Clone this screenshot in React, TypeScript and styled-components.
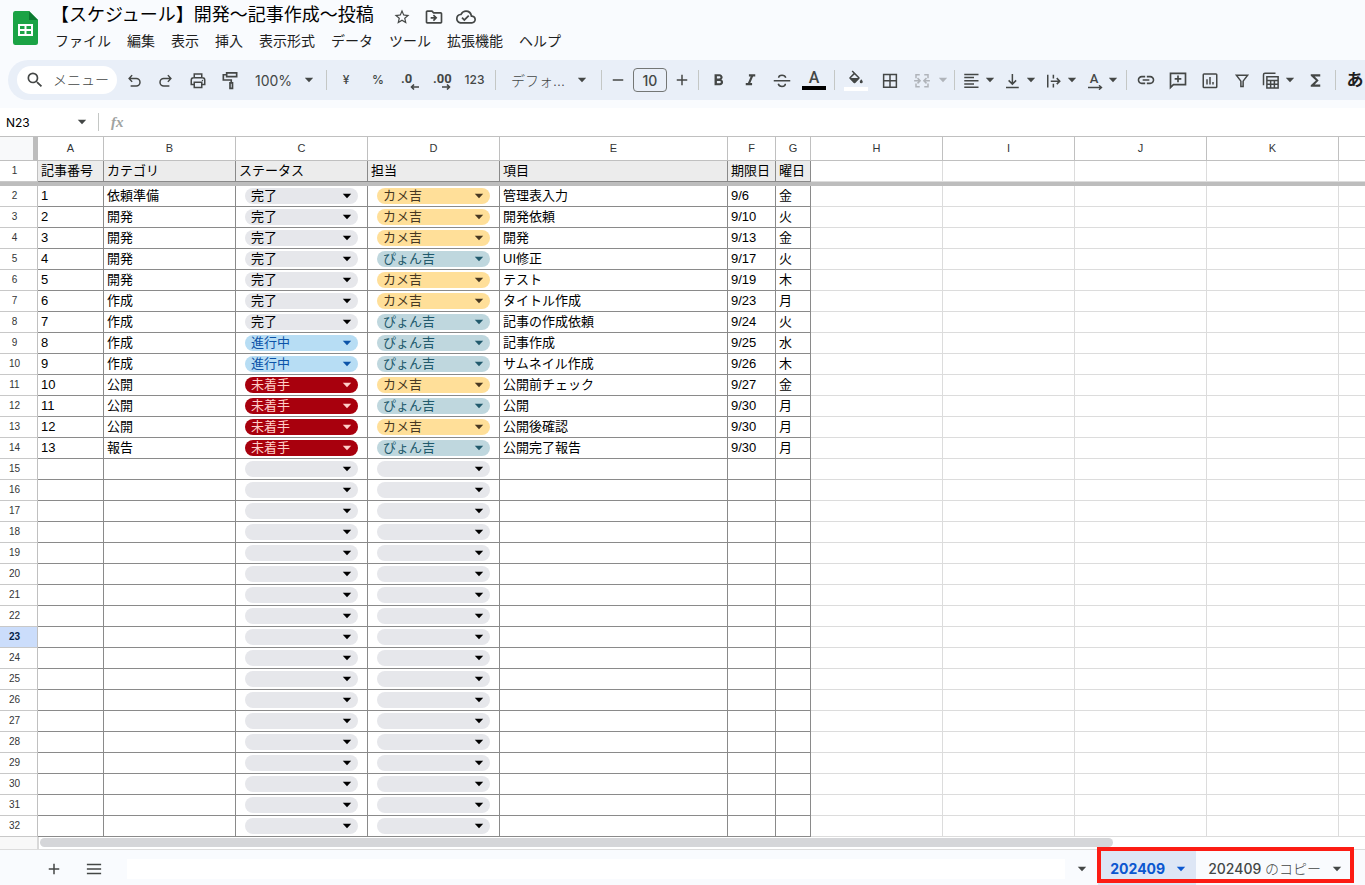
import React from "react";
import styled, { createGlobalStyle, css } from "styled-components";
import {
  MdStarBorder,
  MdOutlineDriveFileMove,
  MdOutlineCloudDone,
  MdFormatBold,
  MdFormatItalic,
  MdLink,
  MdFunctions,
  MdSearch,
} from "react-icons/md";

const GlobalStyle = createGlobalStyle`
  * { box-sizing: border-box; }
  body {
    margin: 0;
    background: #f9fbfe;
    color: #1f1f1f;
    font-family: "Liberation Sans", "Noto Sans CJK JP", sans-serif;
    overflow-x: hidden;
  }
  button, input, select {
    font: inherit;
    color: inherit;
    margin: 0;
    padding: 0;
    border: 0;
    background: none;
    outline: none;
  }
  select { appearance: none; cursor: pointer; }
  button { cursor: pointer; }
`;

const INK = "#444746";

/* ---------- page frame ---------- */

const Page = styled.div`
  display: flex;
  flex-direction: column;
  min-height: 100vh;
`;

const Header = styled.header`
  display: flex;
  height: 60px;
  padding-left: 12px;
  gap: 9px;
`;

const LogoLink = styled.a`
  display: block;
  width: 26px;
  height: 34px;
  margin-top: 11px;
`;

const HeaderText = styled.div`
  flex: 1;
  min-width: 0;
`;

const TitleRow = styled.div`
  display: flex;
  align-items: center;
  height: 31px;
  padding-left: 4px;
`;

const Title = styled.h1`
  margin: 0 12px 0 0;
  font-size: 18px;
  line-height: 31px;
  font-weight: 400;
  color: #000;
  white-space: nowrap;
`;

const TitleButton = styled.button`
  display: flex;
  align-items: center;
  justify-content: center;
  width: 32px;
  height: 31px;
  padding-top: 3px;
  color: ${INK};
`;

const MenuBar = styled.nav`
  display: flex;
  height: 20px;
`;

const MenuItem = styled.button`
  padding: 0 8px;
  font-size: 14px;
  line-height: 20px;
  white-space: nowrap;
`;

/* ---------- toolbar ---------- */

const Toolbar = styled.div`
  display: flex;
  align-items: center;
  height: 40px;
  margin: 0 0 8px 8px;
  padding-left: 9px;
  border-radius: 20px 0 0 20px;
  background: #e9eff8;
  color: ${INK};
  overflow: hidden;
  font-family: Inter, "Noto Sans CJK JP", sans-serif;
  font-size: 14px;
  & > * { flex-shrink: 0; }
`;

const SearchBox = styled.label`
  display: flex;
  align-items: center;
  gap: 8px;
  width: 100px;
  height: 28px;
  margin-right: 1px;
  padding-left: 8px;
  border-radius: 14px;
  background: #fff;
`;

const SearchInput = styled.input`
  width: 60px;
  font-weight: 300;
  line-height: 20px;
  &::placeholder { color: ${INK}; opacity: 1; }
`;

const Tool = styled.button<{ $width?: number }>`
  display: flex;
  flex-direction: column;
  align-items: center;
  justify-content: center;
  width: ${(p) => p.$width ?? 32}px;
  height: 32px;
  font-size: 12px;
  font-weight: 500;
  line-height: 16px;
`;

const SplitTool = styled.button<{ $wide?: boolean }>`
  display: flex;
  align-items: center;
  gap: ${(p) => (p.$wide ? 7 : 5)}px;
  padding: ${(p) => (p.$wide ? "0 2px 0 7px" : "0 4px")};
  height: 32px;
  &:disabled { color: #b0b4ba; cursor: default; }
`;

const Separator = styled.span`
  width: 1px;
  height: 20px;
  margin: 0 3px 0 4px;
  background: #c4c7c5;
`;

const SelectBox = styled.span<{ $width: number; $end: number }>`
  display: grid;
  align-items: center;
  width: ${(p) => p.$width}px;
  height: 32px;
  & > select, & > svg { grid-area: 1 / 1; }
  & > select { width: 100%; height: 32px; padding-left: 9px; }
  & > svg { justify-self: end; margin-right: ${(p) => p.$end}px; pointer-events: none; }
`;

const FontSelect = styled.select`
  font-weight: 300;
  text-indent: 3px;
`;

const Stepper = styled.span`
  display: flex;
  align-items: center;
  gap: 3px;
  padding-left: 1px;
`;

const SizeInput = styled.input`
  width: 34px;
  height: 24px;
  border: 1px solid #747775;
  border-radius: 4px;
  text-align: center;
  font-weight: 500;
`;

const ColorBar = styled.span<{ $color: string }>`
  width: 24px;
  height: 4px;
  background: ${(p) => p.$color};
`;

const Letter = styled.span<{ $size: number }>`
  font-family: Roboto, sans-serif;
  font-size: ${(p) => p.$size}px;
  line-height: ${(p) => p.$size}px;
  font-weight: 500;
`;

const Decimal = styled.span`
  display: flex;
  flex-direction: column;
  width: 18px;
  padding-top: 2px;
  font-family: Roboto, sans-serif;
  font-size: 13px;
  font-weight: 700;
  line-height: 11px;
  text-align: left;
  & > svg { align-self: flex-end; }
`;

const StackedIcon = styled.span`
  display: flex;
  flex-direction: column;
  align-items: center;
  width: 18px;
  padding-top: 2px;
`;

const KanaMode = styled.span`
  color: #1f1f1f;
  font-size: 17px;
  font-weight: 700;
`;

/* ---------- formula bar ---------- */

const FormulaBar = styled.div`
  display: flex;
  align-items: center;
  height: 29px;
  background: #fff;
  border-bottom: 1px solid #c0c0c0;
`;

const NameBox = styled.input`
  width: 77px;
  padding-left: 6px;
  font-family: Inter, sans-serif;
  font-size: 12px;
  color: #000;
`;

const NameMenu = styled.button`
  display: flex;
  width: 21px;
  color: ${INK};
`;

const BarRule = styled.span`
  width: 1px;
  height: 18px;
  background: #c4c7c5;
`;

const FxLabel = styled.label`
  width: 34px;
  padding-left: 12px;
  font-family: "Liberation Serif", serif;
  font-style: italic;
  font-weight: 700;
  font-size: 15px;
  line-height: 24px;
  color: #a0a3a2;
`;

const FormulaInput = styled.input`
  flex: 1;
  font-size: 13px;
`;

/* ---------- grid ---------- */

const GridArea = styled.main`
  flex: 1;
  background: #fff;
  overflow: hidden;
`;

const Sheet = styled.table`
  width: 100%;
  table-layout: fixed;
  border-collapse: separate;
  border-spacing: 0;
  color: #000;
  & tr > *:last-child { border-right: 0; }
`;

const Column = styled.col<{ $width?: number }>`
  width: ${(p) => (p.$width ? `${p.$width}px` : "auto")};
`;

const Corner = styled.td`
  padding: 0;
  background: #f8f9fa;
  border-right: 5px solid #bdbdbd;
  border-bottom: 1px solid #c0c0c0;
`;

const ColumnHead = styled.th`
  height: 24px;
  padding: 0 0 2px;
  border-right: 1px solid #c0c0c0;
  border-bottom: 1px solid #c0c0c0;
  font-size: 11px;
  line-height: 20px;
  font-weight: 400;
  color: #333536;
`;

const RowHead = styled.th<{ $selected?: boolean }>`
  height: 21px;
  padding: 0 8px 0 0;
  border-right: 1px solid #c0c0c0;
  border-bottom: 1px solid #c8c8c8;
  font-size: 10px;
  font-weight: ${(p) => (p.$selected ? 700 : 400)};
  line-height: 20px;
  color: ${(p) => (p.$selected ? "#041e49" : "#333536")};
  background: ${(p) => (p.$selected ? "#cbddfb" : "#fff")};
`;

const Cell = styled.td<{ $ruled?: boolean; $head?: boolean }>`
  height: 21px;
  padding: 0 0 0 3px;
  border-right: 1px solid #dcdcdc;
  border-bottom: 1px solid #dcdcdc;
  font-size: 13px;
  line-height: 20px;
  white-space: nowrap;
  overflow: hidden;
  ${(p) => p.$ruled && css`border-color: #8a8a8a;`}
  ${(p) => p.$head && css`background: #ececec;`}
`;

const ChipCell = styled(Cell)`
  padding: 0 9px;
`;

const FreezeBar = styled.td`
  height: 4px;
  padding: 0;
  background: #bdbdbd;
`;

const tones = {
  empty: ["#e6e7eb", "#000000"],
  gray: ["#e6e7eb", "#000000"],
  blue: ["#b7ddf4", "#0b53a8"],
  red: ["#a8000d", "#ffcfc9"],
  yellow: ["#ffdf99", "#473822"],
  teal: ["#bfd7de", "#215a6c"],
} as const;
type Tone = keyof typeof tones;

const Chip = styled.span<{ $tone: Tone }>`
  display: grid;
  align-items: center;
  height: 16px;
  border-radius: 8px;
  background: ${(p) => tones[p.$tone][0]};
  color: ${(p) => tones[p.$tone][1]};
  & > select, & > svg { grid-area: 1 / 1; }
  & > select { width: 100%; height: 16px; padding-left: 6px; line-height: 16px; }
  & > svg { justify-self: end; margin-right: 6px; pointer-events: none; }
`;

/* ---------- bottom ---------- */

const ScrollRow = styled.div`
  display: flex;
  height: 13px;
  background: #fff;
  border-bottom: 1px solid #dcdcdc;
`;

const ScrollCorner = styled.div`
  width: 39px;
  background: #f8f8f8;
  border-right: 2px solid #d9d9d9;
`;

const ScrollTrack = styled.div`
  flex: 1;
  padding: 1px 0 0 1px;
`;

const ScrollThumb = styled.div`
  width: 81%;
  height: 9px;
  border-radius: 5px;
  background: #d5d6d9;
`;

const BottomBar = styled.footer`
  display: flex;
  align-items: center;
  height: 35px;
  padding: 0 13px 0 34px;
  color: ${INK};
`;

const BottomButton = styled.button`
  display: flex;
  align-items: center;
  justify-content: center;
  width: 40px;
  height: 32px;
  padding-top: 2px;
`;

const TabStrip = styled.div`
  flex: 1;
  height: 20px;
  margin: 2px 12px 0 13px;
  background: #fff;
`;

const TabScroll = styled.button`
  display: flex;
  width: 21px;
  margin-top: 3px;
`;

const MarkedTabs = styled.div`
  position: relative;
  display: flex;
  align-self: stretch;
  &::after {
    content: "";
    position: absolute;
    inset: -3px -2px 2px -1px;
    border: 4px solid #fc1c14;
    pointer-events: none;
  }
`;

const SheetTab = styled.button<{ $active?: boolean }>`
  display: flex;
  align-items: center;
  gap: 11px;
  padding: 3px 10px 0 12px;
  font-family: Inter, "Noto Sans CJK JP", sans-serif;
  font-size: 14px;
  line-height: 20px;
  white-space: nowrap;
  font-weight: ${(p) => (p.$active ? 700 : 500)};
  color: ${(p) => (p.$active ? "#0b57d0" : INK)};
  background: ${(p) => (p.$active ? "#dde6f5" : "transparent")};
`;

const TabKana = styled.span`
  font-weight: 300;
`;

/* ---------- drawings ---------- */

const Arrow = () => (
  <svg width="10" height="10" viewBox="0 0 10 10" aria-hidden="true">
    <path d="M.8 2.800h8.400L5 7.200z" fill="currentColor" />
  </svg>
);

const Line = ({ children, size = 18, sw = 2 }: { children: React.ReactNode; size?: number; sw?: number }) => (
  <svg width={size} height={size} viewBox="0 0 24 24" fill="none" stroke="currentColor" strokeWidth={sw} aria-hidden="true">
    {children}
  </svg>
);

const SheetsLogo = () => (
  <svg width="26" height="34" viewBox="0 0 26 34" aria-hidden="true">
    <path d="M3 0h14l9 9v22.500a2.500 2.500 0 0 1-2.500 2.500H3a2.500 2.500 0 0 1-2-2.500v-29A2.500 2.500 0 0 1 3 0z" fill="#1ba345" />
    <path d="M17 0l9 9h-9z" fill="#0c7a31" />
    <path d="M6 13h15v12H6z" fill="#fff" />
    <path d="M8 15h4.500v3H8zM14.500 15H19v3h-4.500zM8 20h4.500v3H8zM14.500 20H19v3h-4.500z" fill="#1ba345" />
  </svg>
);

const UndoIcon = () => (
  <Line><path d="M9.500 5.500L5.500 10l4 4.500M6 10h9a4.500 4.500 0 0 1 0 10H7.500" /></Line>
);
const RedoIcon = () => (
  <Line><path d="M14.500 5.500l4 4.500-4 4.500M18 10H9a4.500 4.500 0 0 0 0 10h7.500" /></Line>
);
const PrintIcon = () => (
  <Line>
    <path d="M7 9V4h10v5M7 18H3v-6a3 3 0 0 1 3-3h12a3 3 0 0 1 3 3v6h-4M7 15h10v7H7z" />
    <circle cx="18" cy="12.500" r="1" fill="currentColor" stroke="none" />
  </Line>
);
const PaintIcon = () => (
  <Line size={20}>
    <path d="M8 3.500h12v4.500H8zM8 5.700H4V12h9.500v3M12 15.500h3V22h-3z" />
  </Line>
);
const StrikeIcon = () => (
  <Line>
    <path d="M1 13h22M17 9c-.6-2.400-2.500-3.500-5-3.500S7.500 7 7.500 9M7 17c.6 2.400 2.500 3.500 5 3.500s4.500-1.500 4.500-3.500" />
  </Line>
);
const BucketIcon = () => (
  <svg width="18" height="18" viewBox="0 0 24 20" fill="currentColor" aria-hidden="true">
    <path d="M16.560 8.940L7.620 0 6.210 1.410l2.380 2.380-5.150 5.150a1.490 1.490 0 0 0 0 2.120l5.500 5.500c.29.29.68.44 1.060.44s.77-.15 1.060-.44l5.500-5.500c.59-.58.59-1.530 0-2.120zM5.210 10L10 5.210 14.790 10H5.210zM19 11.500s-2 2.170-2 3.500a2 2 0 0 0 4 0c0-1.330-2-3.500-2-3.500z" />
  </svg>
);
const BordersIcon = () => (
  <Line><path d="M3.500 4.500h17v17h-17zM12 4v18M3 13h18" /></Line>
);
const MergeIcon = () => (
  <Line>
    <path d="M9 5H4v4.500M4 16.500V21h5M15 5h5v4.500M20 16.500V21h-5M1.500 13h7.500M6 9.500L9.500 13 6 16.500M22.500 13H15M18 9.500L14.500 13l3.500 3.500" />
  </Line>
);
const AlignIcon = () => (
  <Line><path d="M3 4.500h19M3 8.800h13M3 13h19M3 17.200h13M3 21.500h19" /></Line>
);
const BottomAlignIcon = () => (
  <Line><path d="M4 22h17M12.500 4v13M7.500 12.500l5 5 5-5" /></Line>
);
const OverflowIcon = () => (
  <Line><path d="M5 5v17M12.500 5v5M12.500 17v5M9 13.500h12M17 9.500l4 4-4 4" /></Line>
);
const RightArrow = () => (
  <svg width="18" height="5" viewBox="0 0 18 5" fill="none" stroke="currentColor" strokeWidth="1.400" aria-hidden="true">
    <path d="M3 2.500h13M14 0.300l2.500 2.200L14 4.700" />
  </svg>
);
const SmallArrow = ({ left }: { left?: boolean }) => (
  <svg width="9" height="6" viewBox="0 0 9 6" fill="none" stroke="currentColor" strokeWidth="1.600" aria-hidden="true">
    <path d={left ? "M9 3H1.500M4 .5L1.500 3 4 5.500" : "M0 3h7.500M5 .5L7.500 3 5 5.500"} />
  </svg>
);
const CommentIcon = () => (
  <Line size={20}><path d="M3 21V4h18v13.500H6.500zM12 6.700v8M8 10.700h8" /></Line>
);
const ChartIcon = () => (
  <Line><rect x="3" y="4" width="18" height="18" rx="1" /><path d="M8 11v7M12 8v10M16 14.500V18" /></Line>
);
const FilterIcon = () => (
  <Line><path d="M4.500 5.500h15L13.500 13.500v7h-3v-7z" /></Line>
);
const TableViewIcon = () => (
  <Line>
    <path d="M2 19V5a2 2 0 0 1 2-2h14M6.500 7.500h15v15h-15zM6.500 12.500h15M6.500 17.500h15M11.500 12v10M16.500 12v10" />
  </Line>
);
const PlusIcon = () => (
  <Line><path d="M12 5v14M5 12h14" /></Line>
);
const MinusIcon = () => (
  <Line><path d="M5 12h14" /></Line>
);
const ListIcon = () => (
  <Line><path d="M2.500 6h19M2.500 12h19M2.500 18h19" /></Line>
);

/* ---------- data ---------- */

const menus = ["ファイル", "編集", "表示", "挿入", "表示形式", "データ", "ツール", "拡張機能", "ヘルプ"];

const columns: [string, number?][] = [
  ["A", 66], ["B", 132], ["C", 132], ["D", 132], ["E", 228], ["F", 48],
  ["G", 35], ["H", 132], ["I", 132], ["J", 132], ["K", 132], [""],
];
const outside = ["H", "I", "J", "K", "L"];

const headings = ["記事番号", "カテゴリ", "ステータス", "担当", "項目", "期限日", "曜日"];

const tasks = [
  ["1", "依頼準備", "完了", "カメ吉", "管理表入力", "9/6", "金"],
  ["2", "開発", "完了", "カメ吉", "開発依頼", "9/10", "火"],
  ["3", "開発", "完了", "カメ吉", "開発", "9/13", "金"],
  ["4", "開発", "完了", "ぴょん吉", "UI修正", "9/17", "火"],
  ["5", "開発", "完了", "カメ吉", "テスト", "9/19", "木"],
  ["6", "作成", "完了", "カメ吉", "タイトル作成", "9/23", "月"],
  ["7", "作成", "完了", "ぴょん吉", "記事の作成依頼", "9/24", "火"],
  ["8", "作成", "進行中", "ぴょん吉", "記事作成", "9/25", "水"],
  ["9", "作成", "進行中", "ぴょん吉", "サムネイル作成", "9/26", "木"],
  ["10", "公開", "未着手", "カメ吉", "公開前チェック", "9/27", "金"],
  ["11", "公開", "未着手", "ぴょん吉", "公開", "9/30", "月"],
  ["12", "公開", "未着手", "カメ吉", "公開後確認", "9/30", "月"],
  ["13", "報告", "未着手", "ぴょん吉", "公開完了報告", "9/30", "月"],
];
const blank = ["", "", "", "", "", "", ""];
const LAST_ROW = 32;
const SELECTED_ROW = 23;

const toneOf: Record<string, Tone> = {
  "": "empty",
  完了: "gray",
  進行中: "blue",
  未着手: "red",
  カメ吉: "yellow",
  ぴょん吉: "teal",
};

function ChipSelect({ value, options, label }: { value: string; options: string[]; label: string }) {
  const [current, setCurrent] = React.useState(value);
  return (
    <Chip $tone={toneOf[current]}>
      <select aria-label={label} value={current} onChange={(e) => setCurrent(e.target.value)}>
        <option value="" />
        {options.map((o) => (
          <option key={o}>{o}</option>
        ))}
      </select>
      <Arrow />
    </Chip>
  );
}

function TaskRow({ row }: { row: number }) {
  const [no, category, status, owner, item, due, day] = tasks[row - 2] ?? blank;
  return (
    <tr>
      <RowHead scope="row" $selected={row === SELECTED_ROW}>{row}</RowHead>
      <Cell $ruled>{no}</Cell>
      <Cell $ruled>{category}</Cell>
      <ChipCell $ruled>
        <ChipSelect value={status} options={["完了", "進行中", "未着手"]} label={`ステータス ${row}`} />
      </ChipCell>
      <ChipCell $ruled>
        <ChipSelect value={owner} options={["カメ吉", "ぴょん吉"]} label={`担当 ${row}`} />
      </ChipCell>
      <Cell $ruled>{item}</Cell>
      <Cell $ruled>{due}</Cell>
      <Cell $ruled>{day}</Cell>
      {outside.map((c) => <Cell key={c} />)}
    </tr>
  );
}

export default function App() {
  const rows = Array.from({ length: LAST_ROW - 1 }, (_, i) => i + 2);
  return (
    <Page>
      <GlobalStyle />
      <Header>
        <LogoLink href="#" aria-label="スプレッドシート ホーム"><SheetsLogo /></LogoLink>
        <HeaderText>
          <TitleRow>
            <Title>【スケジュール】開発〜記事作成〜投稿</Title>
            <TitleButton aria-label="スター"><MdStarBorder size={18} /></TitleButton>
            <TitleButton aria-label="移動"><MdOutlineDriveFileMove size={20} /></TitleButton>
            <TitleButton aria-label="保存状況"><MdOutlineCloudDone size={20} /></TitleButton>
          </TitleRow>
          <MenuBar>
            {menus.map((m) => <MenuItem key={m}>{m}</MenuItem>)}
          </MenuBar>
        </HeaderText>
      </Header>

      <Toolbar role="toolbar">
        <SearchBox>
          <MdSearch size={20} />
          <SearchInput placeholder="メニュー" aria-label="メニューを検索" />
        </SearchBox>
        <Tool aria-label="元に戻す"><UndoIcon /></Tool>
        <Tool aria-label="やり直す"><RedoIcon /></Tool>
        <Tool aria-label="印刷"><PrintIcon /></Tool>
        <Tool aria-label="書式を貼り付け"><PaintIcon /></Tool>
        <SelectBox $width={76} $end={8}>
          <select aria-label="ズーム" defaultValue="100%">
            <option>100%</option>
          </select>
          <Arrow />
        </SelectBox>
        <Separator />
        <Tool aria-label="通貨">¥</Tool>
        <Tool aria-label="パーセント">%</Tool>
        <Tool aria-label="小数点以下の桁数を減らす"><Decimal>.0<SmallArrow left /></Decimal></Tool>
        <Tool aria-label="小数点以下の桁数を増やす"><Decimal>.00<SmallArrow /></Decimal></Tool>
        <Tool $width={33} aria-label="表示形式の詳細">123</Tool>
        <Separator />
        <SelectBox $width={98} $end={10}>
          <FontSelect aria-label="フォント" defaultValue="デフォ...">
            <option>デフォ...</option>
          </FontSelect>
          <Arrow />
        </SelectBox>
        <Separator />
        <Stepper>
          <Tool $width={24} aria-label="フォントサイズを縮小"><MinusIcon /></Tool>
          <SizeInput aria-label="フォントサイズ" defaultValue="10" />
          <Tool $width={24} aria-label="フォントサイズを拡大"><PlusIcon /></Tool>
        </Stepper>
        <Separator />
        <Tool aria-label="太字"><MdFormatBold size={19} /></Tool>
        <Tool aria-label="斜体"><MdFormatItalic size={19} /></Tool>
        <Tool aria-label="取り消し線"><StrikeIcon /></Tool>
        <Tool aria-label="テキストの色"><Letter $size={16}>A</Letter><ColorBar $color="#000" /></Tool>
        <Separator />
        <Tool $width={36} aria-label="塗りつぶしの色"><BucketIcon /><ColorBar $color="#fff" /></Tool>
        <Tool aria-label="枠線"><BordersIcon /></Tool>
        <SplitTool $wide disabled aria-label="セルを結合"><MergeIcon /><Arrow /></SplitTool>
        <Separator />
        <SplitTool aria-label="水平方向の配置"><AlignIcon /><Arrow /></SplitTool>
        <SplitTool aria-label="垂直方向の配置"><BottomAlignIcon /><Arrow /></SplitTool>
        <SplitTool aria-label="テキストの折り返し"><OverflowIcon /><Arrow /></SplitTool>
        <SplitTool aria-label="テキストの回転">
          <StackedIcon><Letter $size={13}>A</Letter><RightArrow /></StackedIcon>
          <Arrow />
        </SplitTool>
        <Separator />
        <Tool aria-label="リンクを挿入"><MdLink size={20} /></Tool>
        <Tool aria-label="コメントを挿入"><CommentIcon /></Tool>
        <Tool aria-label="グラフを挿入"><ChartIcon /></Tool>
        <Tool aria-label="フィルタを作成"><FilterIcon /></Tool>
        <SplitTool aria-label="フィルタ表示"><TableViewIcon /><Arrow /></SplitTool>
        <Tool aria-label="関数"><MdFunctions size={19} /></Tool>
        <Separator />
        <Tool aria-label="入力ツール"><KanaMode>あ</KanaMode></Tool>
      </Toolbar>

      <FormulaBar>
        <NameBox aria-label="名前ボックス" defaultValue="N23" />
        <NameMenu aria-label="名前付き範囲"><Arrow /></NameMenu>
        <BarRule />
        <FxLabel htmlFor="formula">fx</FxLabel>
        <FormulaInput id="formula" />
      </FormulaBar>

      <GridArea>
        <Sheet>
          <colgroup>
            <Column $width={38} />
            {columns.map(([name, width]) => <Column key={name} $width={width} />)}
          </colgroup>
          <thead>
            <tr>
              <Corner />
              {columns.map(([name]) => <ColumnHead key={name} scope="col">{name}</ColumnHead>)}
            </tr>
          </thead>
          <tbody>
            <tr>
              <RowHead scope="row">1</RowHead>
              {headings.map((h) => <Cell key={h} $ruled $head>{h}</Cell>)}
              {outside.map((c) => <Cell key={c} />)}
            </tr>
            <tr aria-hidden="true">
              <FreezeBar colSpan={13} />
            </tr>
            {rows.map((r) => <TaskRow key={r} row={r} />)}
          </tbody>
        </Sheet>
      </GridArea>

      <ScrollRow>
        <ScrollCorner />
        <ScrollTrack><ScrollThumb /></ScrollTrack>
      </ScrollRow>

      <BottomBar>
        <BottomButton aria-label="シートを追加"><PlusIcon /></BottomButton>
        <BottomButton aria-label="すべてのシート"><ListIcon /></BottomButton>
        <TabStrip />
        <TabScroll aria-label="シートメニュー"><Arrow /></TabScroll>
        <MarkedTabs>
          <SheetTab $active>202409<Arrow /></SheetTab>
          <SheetTab><span>202409 <TabKana>のコピー</TabKana></span><Arrow /></SheetTab>
        </MarkedTabs>
      </BottomBar>
    </Page>
  );
}
